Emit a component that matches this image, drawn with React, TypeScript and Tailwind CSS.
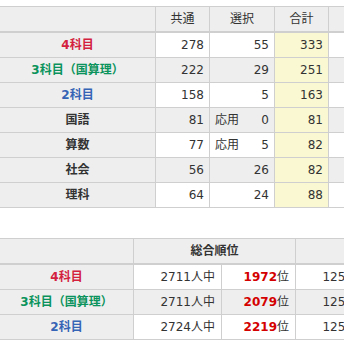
import React from "react";

const font = { fontFamily: '"DejaVu Sans", "Noto Sans CJK JP", sans-serif' };

type Row = {
  label: string;
  color: string;
  kyotsu: number;
  oyo?: boolean;
  sentaku: number;
  total: number;
};

const scoreRows: Row[] = [
  { label: "4科目", color: "text-[#d3213e] font-bold", kyotsu: 278, sentaku: 55, total: 333 },
  { label: "3科目（国算理）", color: "text-[#0a935c] font-bold", kyotsu: 222, sentaku: 29, total: 251 },
  { label: "2科目", color: "text-[#3563b5] font-bold", kyotsu: 158, sentaku: 5, total: 163 },
  { label: "国語", color: "text-[#333] font-bold", kyotsu: 81, oyo: true, sentaku: 0, total: 81 },
  { label: "算数", color: "text-[#333] font-bold", kyotsu: 77, oyo: true, sentaku: 5, total: 82 },
  { label: "社会", color: "text-[#333] font-bold", kyotsu: 56, sentaku: 26, total: 82 },
  { label: "理科", color: "text-[#333] font-bold", kyotsu: 64, sentaku: 24, total: 88 },
];

const rankRows = [
  { label: "4科目", color: "text-[#d3213e]", count: 2711, rank: 1972, other: "1250人中" },
  { label: "3科目（国算理）", color: "text-[#0a935c]", count: 2711, rank: 2079, other: "1250人中" },
  { label: "2科目", color: "text-[#3563b5]", count: 2724, rank: 2219, other: "1257人中" },
];

export default function App() {
  return (
    <div className="w-[344px] h-[344px] overflow-hidden bg-white text-[12px] text-[#333]" style={font}>
      {/* 得点表 */}
      <div className="mt-[6px] w-[420px] border-t border-[#cfcfcf]">
        <div className="flex h-[26px] border-b-2 border-[#cfcfcf] bg-[#eeeeee]">
          <div className="w-[156px] border-r border-[#cfcfcf]" />
          <div className="w-[54px] border-r border-[#cfcfcf] flex items-center justify-center">共通</div>
          <div className="w-[65px] border-r border-[#cfcfcf] flex items-center justify-center">選択</div>
          <div className="w-[54px] border-r border-[#cfcfcf] flex items-center justify-center">合計</div>
          <div className="w-[90px]" />
        </div>
        {scoreRows.map((r, i) => {
          const bg = i % 2 === 0 ? "bg-white" : "bg-[#eeeeee]";
          return (
            <div key={r.label} className="flex h-[25px] border-b border-[#cfcfcf]">
              <div className={`w-[156px] border-r border-[#cfcfcf] bg-[#eeeeee] flex items-center justify-center ${r.color}`}>
                {r.label}
              </div>
              <div className={`w-[54px] border-r border-[#cfcfcf] flex items-center justify-end px-[5px] ${bg}`}>
                {r.kyotsu}
              </div>
              <div className={`w-[65px] border-r border-[#cfcfcf] flex items-center justify-between px-[5px] ${bg}`}>
                <span>{r.oyo ? "応用" : ""}</span>
                <span>{r.sentaku}</span>
              </div>
              <div className="w-[54px] border-r border-[#cfcfcf] bg-[#faf8d2] flex items-center justify-end px-[5px]">
                {r.total}
              </div>
              <div className={`w-[90px] ${bg}`} />
            </div>
          );
        })}
      </div>

      {/* 順位表 */}
      <div className="mt-[30px] w-[420px] border-t border-[#cfcfcf]">
        <div className="flex h-[26px] border-b-2 border-[#cfcfcf] bg-[#eeeeee]">
          <div className="w-[134px] border-r border-[#cfcfcf]" />
          <div className="w-[162px] border-r border-[#cfcfcf] flex items-center justify-center font-bold">総合順位</div>
          <div className="w-[120px]" />
        </div>
        {rankRows.map((r, i) => {
          const bg = i % 2 === 0 ? "bg-white" : "bg-[#eeeeee]";
          return (
            <div key={r.label} className="flex h-[25px] border-b border-[#cfcfcf]">
              <div className={`w-[134px] border-r border-[#cfcfcf] bg-[#eeeeee] flex items-center justify-center font-bold ${r.color}`}>
                {r.label}
              </div>
              <div className={`w-[88px] border-r border-[#cfcfcf] flex items-center justify-end px-[6px] ${bg}`}>
                {r.count}人中
              </div>
              <div className={`w-[74px] border-r border-[#cfcfcf] flex items-center justify-end px-[6px] ${bg}`}>
                <span className="font-bold text-[#d40000]">{r.rank}</span>位
              </div>
              <div className={`w-[88px] border-r border-[#cfcfcf] flex items-center justify-end px-[6px] ${bg}`}>
                {r.other}
              </div>
            </div>
          );
        })}
      </div>
    </div>
  );
}
